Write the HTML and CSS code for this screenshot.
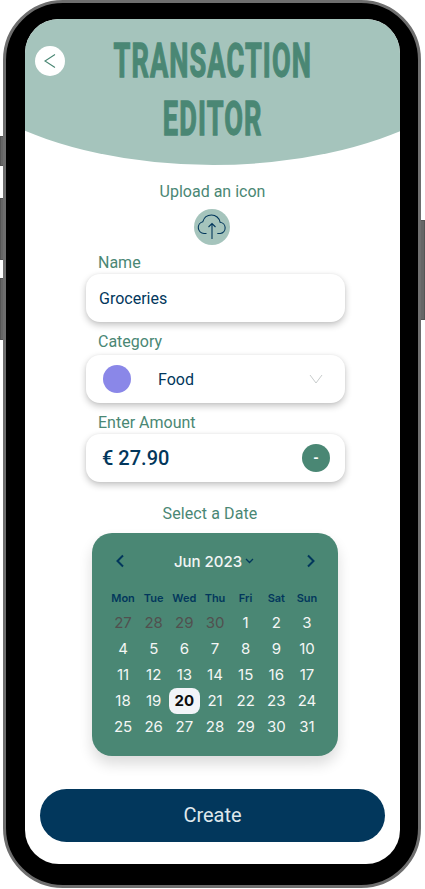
FILE: index.html
```html
<!DOCTYPE html>
<html lang="en">
<head>
<meta charset="utf-8">
<title>Transaction Editor</title>
<link rel="stylesheet" href="styles.css">
</head>
<body>
<div class="device">
  <span class="hw hw-mute"></span>
  <span class="hw hw-up"></span>
  <span class="hw hw-down"></span>
  <span class="hw hw-power"></span>
  <div class="bezel">
    <main class="screen">
      <header class="hero">
        <button class="back" aria-label="Back">
          <svg width="14" height="16" viewBox="0 0 14 16"><path d="M12 1.500 2 8l10 6.500" fill="none" stroke="#4a8774" stroke-width="1.100"/></svg>
        </button>
        <h1 class="title">Transaction<br>Editor</h1>
      </header>

      <section class="upload">
        <div class="upload-label">Upload an icon</div>
        <div class="upload-btn">
          <svg width="32" height="28" viewBox="0 0 32 28"><path d="M10.500 20.500H8a6 6 0 0 1-1.200-11.800C8 4.500 11.500 2 15.500 2c4.300 0 7.800 3 8.600 7.200a5.700 5.700 0 0 1 .2 11.300h-3" fill="none" stroke="#02375c" stroke-width="1.100"/><path d="M16 26V10.500M12.500 14l3.500-3.500 3.500 3.500" fill="none" stroke="#02375c" stroke-width="1.100"/></svg>
        </div>
      </section>

      <section class="form">
        <label class="field-label">Name</label>
        <div class="card name-card">Groceries</div>
        <label class="field-label cat-label">Category</label>
        <div class="card cat-card">
          <span class="dot"></span>
          <span class="cat-name">Food</span>
          <svg class="cat-chev" width="14" height="10" viewBox="0 0 14 10"><path d="M1 1l6 8 6-8" fill="none" stroke="#c8cccc" stroke-width="1"/></svg>
        </div>
        <label class="field-label">Enter Amount</label>
        <div class="card amount-card">
          <span class="amount">€ 27.90</span>
          <span class="minus">-</span>
        </div>
      </section>

      <div class="date-label">Select a Date</div>

      <section class="cal">
        <div class="cal-head">
          <svg width="10" height="14" viewBox="0 0 10 14"><path d="M8 1.500 2.500 7 8 12.500" fill="none" stroke="#02375c" stroke-width="2"/></svg>
          <div class="cal-month">Jun 2023
            <svg width="9" height="6" viewBox="0 0 9 6"><path d="M1 1l3.500 3.500L8 1" fill="none" stroke="#02375c" stroke-width="1.300"/></svg>
          </div>
          <svg width="10" height="14" viewBox="0 0 10 14"><path d="M2 1.500 7.500 7 2 12.500" fill="none" stroke="#02375c" stroke-width="2"/></svg>
        </div>
        <div class="cal-grid week">
          <span>Mon</span><span>Tue</span><span>Wed</span><span>Thu</span><span>Fri</span><span>Sat</span><span>Sun</span>
        </div>
        <div class="cal-grid days">
          <span class="off">27</span><span class="off">28</span><span class="off">29</span><span class="off">30</span><span>1</span><span>2</span><span>3</span>
          <span>4</span><span>5</span><span>6</span><span>7</span><span>8</span><span>9</span><span>10</span>
          <span>11</span><span>12</span><span>13</span><span>14</span><span>15</span><span>16</span><span>17</span>
          <span>18</span><span>19</span><span class="sel">20</span><span>21</span><span>22</span><span>23</span><span>24</span>
          <span>25</span><span>26</span><span>27</span><span>28</span><span>29</span><span>30</span><span>31</span>
        </div>
      </section>

      <button class="create">Create</button>
    </main>
  </div>
</div>
</body>
</html>
```
FILE: styles.css
```css
* { box-sizing: border-box; }
html, body { margin: 0; padding: 0; background: #fff; }
body { width: 425px; height: 889px; overflow: hidden; font-family: Roboto, sans-serif; }

.device { position: relative; width: 425px; height: 889px; padding: 0 3px 1px 3px; }
.hw { position: absolute; background: #666; border: 1px solid #555; }
.hw-mute { left: 0; top: 136px; width: 4px; height: 30px; }
.hw-up { left: 0; top: 198px; width: 4px; height: 62px; }
.hw-down { left: 0; top: 278px; width: 4px; height: 62px; }
.hw-power { right: 0; top: 220px; width: 5px; height: 100px; }

.bezel {
  position: relative; width: 418px; height: 888px;
  padding: 16px 18px 21px 19px;
  background: #000; border-radius: 60px;
  border: 3px solid #6e6e6e;
}
.screen {
  position: relative; width: 375px; height: 845px; background: #fff;
  border-radius: 34px; overflow: hidden;
}

.hero { position: relative; height: 146px; display: flex; justify-content: center; }
.hero::before {
  content: ""; position: absolute; left: -112px; top: -164px;
  width: 600px; height: 310px; border-radius: 50%; background: #a5c4bc;
}
.back {
  position: absolute; left: 10px; top: 27px; width: 30px; height: 30px; padding: 0;
  border: 0; border-radius: 50%; background: #fff; z-index: 1;
  display: flex; align-items: center; justify-content: center;
}
.title {
  position: relative; margin: 13px 0 0; text-align: center; text-transform: uppercase;
  font-family: Roboto, sans-serif; white-space: nowrap;
  font-weight: 700; font-size: 48px; line-height: 58px; color: #4a8774;
  -webkit-text-stroke: 1.300px #4a8774;
  letter-spacing: 2px; transform: scaleX(0.565);
}

.upload { display: flex; flex-direction: column; align-items: center; padding-top: 17px; }
.upload-label { font-size: 16px; line-height: 19px; color: #4a8774; }
.upload-btn {
  margin: 8px 1px 0 0; width: 36px; height: 36px; border-radius: 50%; background: #a5c4bc;
  display: flex; align-items: center; justify-content: center;
}

.form { padding: 8px 55px 0 61px; display: flex; flex-direction: column; }
.field-label { display: block; padding-left: 12px; font-size: 16px; line-height: 19px; height: 21px; color: #4a8774; }
.cat-label { height: 23px; }
.card {
  height: 48px; background: #fff; border-radius: 14px; margin-bottom: 10px;
  box-shadow: 0 3px 7px rgba(0,0,0,.24), 0 0 3px rgba(0,0,0,.05);
  display: flex; align-items: center; color: #02375c;
}
.name-card { padding-left: 13px; font-size: 16px; }
.cat-card { padding: 0 22px 0 17px; font-size: 16px; }
.dot { width: 28px; height: 28px; border-radius: 50%; background: #8a87e8; }
.cat-name { margin-left: 27px; flex: 1; }
.amount-card { padding: 0 15px 0 16px; justify-content: space-between; }
.amount { font-size: 20px; font-weight: 500; }
.minus {
  width: 28px; height: 28px; border-radius: 50%; background: #4a8774; color: #fff;
  display: flex; align-items: center; justify-content: center; font-size: 14px; font-weight: 700;
}

.date-label { margin-top: 12px; padding-right: 5px; text-align: center; font-size: 16px; line-height: 19px; color: #4a8774; letter-spacing: 0.1px; }

.cal {
  margin: 10px 0 0 67px; width: 246px; height: 223px; border-radius: 20px; background: #4a8774;
  box-shadow: 0 8px 14px rgba(0,0,0,.14);
  font-family: Inter, sans-serif; padding: 19px 0 0;
}
.cal-head { display: flex; align-items: center; justify-content: space-between; padding: 0 22px 0 23px; height: 18px; }
.cal-month { display: flex; align-items: center; gap: 3px; font-size: 15px; font-weight: 500; color: #f2f5f4; margin-left: -3px; }
.cal-grid { display: grid; grid-template-columns: repeat(7, 30.670px); justify-content: center; text-align: center; }
.week { margin-top: 20px; height: 16px; font-size: 11px; line-height: 16px; font-weight: 600; color: #02375c; }
.days { margin-top: 4px; grid-auto-rows: 26px; font-size: 15px; line-height: 26px; color: #f4f6f5; }
.off { color: #51504f; }
.sel { background: #f2f4f8; color: #0d0d0d; font-weight: 700; border-radius: 8px; }

.create {
  display: block; margin: 33px 0 0 15px; width: 345px; height: 53px; border: 0; border-radius: 27px;
  background: #02375c; color: #dfe8ec; font-family: Roboto, sans-serif; font-size: 20px; padding: 0 0 2px;
}
```
